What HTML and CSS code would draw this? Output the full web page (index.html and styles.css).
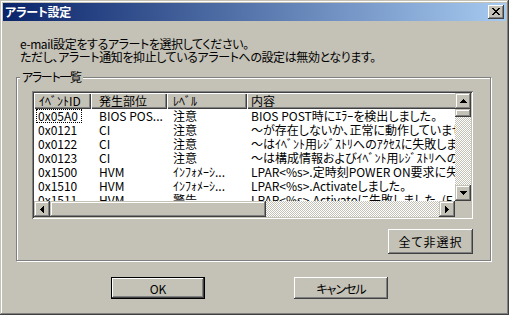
FILE: index.html
```html
<!DOCTYPE html>
<html>
<head>
    <title>アラート設定</title>
    <meta charset="UTF-8">
    <link rel="stylesheet" href="styles.css">
</head>
<body>
    <div class="window">
        <!-- Title bar -->
        <div class="titlebar">
            <span class="title">アラート設定</span>
            <button class="close-btn" title="閉じる">
                <svg width="8" height="7" viewBox="0 0 8 7"><path d="M0 0h2v1h1v1h2V1h1V0h2v1H7v1H6v1H5v1h1v1h1v1h1v1H6V6H5V5H3v1H2v1H0V6h1V5h1V4h1V3H2V2H1V1H0z"/></svg>
            </button>
        </div>

        <div class="dialog-body">
            <!-- Message -->
            <p class="message">e-mail設定をするアラートを選択してください。<br>ただし、アラート通知を抑止しているアラートへの設定は無効となります。</p>

            <!-- Alert list group -->
            <fieldset class="group">
                <legend>アラート一覧</legend>
                <div class="listview">
                    <div class="lv-view">
                        <table>
                            <colgroup>
                                <col class="col-id"/>
                                <col class="col-part"/>
                                <col class="col-level"/>
                                <col class="col-text"/>
                            </colgroup>
                            <thead>
                                <tr>
                                    <th class="c-id">ｲﾍﾞﾝﾄID</th>
                                    <th class="c-part">発生部位</th>
                                    <th class="c-level">ﾚﾍﾞﾙ</th>
                                    <th class="c-text">内容</th>
                                </tr>
                            </thead>
                            <tbody>
                                <tr>
                                    <td class="c-id"><span class="focus">0x05A0</span></td>
                                    <td class="c-part">BIOS POS...</td>
                                    <td class="c-level">注意</td>
                                    <td class="c-text">BIOS POST時にｴﾗｰを検出しました。</td>
                                </tr>
                                <tr>
                                    <td class="c-id"><span>0x0121</span></td>
                                    <td class="c-part">CI</td>
                                    <td class="c-level">注意</td>
                                    <td class="c-text">～が存在しないか、正常に動作していません。</td>
                                </tr>
                                <tr>
                                    <td class="c-id"><span>0x0122</span></td>
                                    <td class="c-part">CI</td>
                                    <td class="c-level">注意</td>
                                    <td class="c-text">～はｲﾍﾞﾝﾄ用ﾚｼﾞｽﾄﾘへのｱｸｾｽに失敗しました。</td>
                                </tr>
                                <tr>
                                    <td class="c-id"><span>0x0123</span></td>
                                    <td class="c-part">CI</td>
                                    <td class="c-level">注意</td>
                                    <td class="c-text">～は構成情報およびｲﾍﾞﾝﾄ用ﾚｼﾞｽﾄﾘへのｱｸｾｽに失敗しました。</td>
                                </tr>
                                <tr>
                                    <td class="c-id"><span>0x1500</span></td>
                                    <td class="c-part">HVM</td>
                                    <td class="c-level">ｲﾝﾌｫﾒｰｼ...</td>
                                    <td class="c-text">LPAR&lt;%s&gt;.定時刻POWER ON要求に失敗しました。</td>
                                </tr>
                                <tr>
                                    <td class="c-id"><span>0x1510</span></td>
                                    <td class="c-part">HVM</td>
                                    <td class="c-level">ｲﾝﾌｫﾒｰｼ...</td>
                                    <td class="c-text">LPAR&lt;%s&gt;.Activateしました。</td>
                                </tr>
                                <tr>
                                    <td class="c-id"><span>0x1511</span></td>
                                    <td class="c-part">HVM</td>
                                    <td class="c-level">警告</td>
                                    <td class="c-text">LPAR&lt;%s&gt;.Activateに失敗しました。(F...</td>
                                </tr>
                            </tbody>
                        </table>
                    </div>

                    <!-- Vertical scrollbar -->
                    <div class="vscroll">
                        <div class="sb-btn"><svg width="7" height="4" viewBox="0 0 7 4"><path d="M3 0h1v1h1v1h1v1h1v1H0V3h1V2h1V1h1z"/></svg></div>
                        <div class="sb-thumb v"></div>
                        <div class="sb-track"></div>
                        <div class="sb-btn"><svg width="7" height="4" viewBox="0 0 7 4"><path d="M0 0h7v1H6v1H5v1H4v1H3V3H2V2H1V1H0z"/></svg></div>
                    </div>

                    <!-- Horizontal scrollbar -->
                    <div class="hscroll">
                        <div class="sb-btn"><svg width="4" height="7" viewBox="0 0 4 7"><path d="M3 0h1v7H3V6H2V5H1V4H0V3h1V2h1V1h1z"/></svg></div>
                        <div class="sb-thumb h"></div>
                        <div class="sb-track"></div>
                        <div class="sb-btn"><svg width="4" height="7" viewBox="0 0 4 7"><path d="M0 0h1v1h1v1h1v1h1v1H3v1H2v1H1v1H0z"/></svg></div>
                    </div>
                    <div class="sb-corner"></div>
                </div>

                <div class="group-actions">
                    <button class="btn btn-wide">全て非選択</button>
                </div>
            </fieldset>

            <!-- Dialog buttons -->
            <div class="dialog-buttons">
                <button class="btn btn-default">OK</button>
                <button class="btn btn-cancel">キャンセル</button>
            </div>
        </div>
    </div>
</body>
</html>
```

FILE: styles.css
```css
/* --- Classic dialog window --- */
body {
    margin: 0;
    padding: 0;
    font-family: "Noto Sans CJK JP", "Liberation Sans", sans-serif;
    font-size: 12px;
    font-feature-settings: "palt";
    color: #000;
}
.window {
    width: 509px;
    height: 315px;
    box-sizing: border-box;
    padding: 3px;
    background-color: #c4c1b6;
    box-shadow: inset -1px -1px #404040, inset 1px 1px #c4c1b6,
                inset -2px -2px #808080, inset 2px 2px #fff;
    display: flex;
    flex-direction: column;
}

/* --- Title bar --- */
.titlebar {
    height: 18px;
    flex-shrink: 0;
    display: flex;
    align-items: center;
    background: linear-gradient(to right, #0a246a, #a6caf0);
}
.title {
    padding-left: 2px;
    color: #fff;
    font-weight: 700;
    line-height: 18px;
    letter-spacing: -0.3px;
}
.close-btn {
    margin-left: auto;
    margin-right: 2px;
    width: 16px;
    height: 14px;
    padding: 0;
    border: none;
    background-color: #c4c1b6;
    box-shadow: inset -1px -1px #404040, inset 1px 1px #fff, inset -2px -2px #808080;
    display: flex;
    align-items: center;
    justify-content: center;
}
.close-btn svg { margin: 0 1px 1px 0; }

/* --- Body --- */
.dialog-body {
    flex-grow: 1;
    display: flex;
    flex-direction: column;
}
.message {
    margin: 16px 0 0 17px;
    line-height: 13px;
    letter-spacing: -0.4px;
}

/* --- Group box --- */
.group {
    margin: 7px 0 0 13px;
    padding: 0;
    width: 475px;
    height: 191px;
    box-sizing: border-box;
    min-width: 0;
    border: 1px solid #808080;
    box-shadow: inset 1px 1px #fff, 1px 1px #fff;
}
.group legend {
    margin-left: 3px;
    padding: 0 2px;
    line-height: 14px;
    letter-spacing: -1.3px;
    background-color: #c4c1b6;
}

/* --- List view --- */
.listview {
    margin: 7px 0 0 15px;
    width: 441px;
    height: 128px;
    box-sizing: border-box;
    padding: 2px;
    background-color: #fff;
    box-shadow: inset 1px 1px #808080, inset -1px -1px #fff,
                inset 2px 2px #404040, inset -2px -2px #c4c1b6;
    display: grid;
    grid-template-columns: 1fr 16px;
    grid-template-rows: 1fr 16px;
}
.lv-view {
    overflow: hidden;
    background-color: #fff;
}
table {
    width: 560px;
    border-collapse: collapse;
    table-layout: fixed;
}
.col-id { width: 57px; }
.col-part { width: 76px; }
.col-level { width: 80px; }
.col-text { width: 347px; }
th, td {
    padding: 0 0 0 6px;
    text-align: left;
    white-space: nowrap;
    overflow: hidden;
}
th {
    height: 16px;
    line-height: 16px;
    font-weight: 400;
    background-color: #c4c1b6;
    box-shadow: inset 1px 1px #fff, inset -1px -1px #404040, inset -2px -2px #808080;
}
td {
    height: 14px;
    line-height: 14px;
}
th.c-id { padding-left: 5px; }
td.c-id { padding-left: 2px; }
.c-part { padding-left: 8px; }
.c-text { padding-left: 4px; }
td.c-id span {
    padding: 0 1px;
    border: 1px solid transparent;
    display: inline-block;
    line-height: 12px;
}
td.c-id span.focus {
    border: 1px dotted #000;
    padding-right: 3px;
}

/* --- Scrollbars --- */
.vscroll {
    display: flex;
    flex-direction: column;
}
.hscroll {
    display: flex;
}
.sb-btn {
    width: 16px;
    height: 16px;
    flex-shrink: 0;
    background-color: #c4c1b6;
    box-shadow: inset -1px -1px #404040, inset 1px 1px #c4c1b6,
                inset -2px -2px #808080, inset 2px 2px #fff;
    display: flex;
    align-items: center;
    justify-content: center;
}
.sb-thumb {
    flex-shrink: 0;
    background-color: #c4c1b6;
    box-shadow: inset -1px -1px #404040, inset 1px 1px #c4c1b6,
                inset -2px -2px #808080, inset 2px 2px #fff;
}
.sb-thumb.v { height: 8px; }
.sb-thumb.h { width: 216px; }
.sb-track {
    flex-grow: 1;
    background-color: #fff;
    background-image: repeating-conic-gradient(#c4c1b6 0 25%, #fff 0 50%);
    background-size: 2px 2px;
}
.sb-corner { background-color: #c4c1b6; }

/* --- Buttons --- */
.btn {
    padding: 0;
    border: none;
    font: inherit;
    color: #000;
    background-color: #c4c1b6;
    box-shadow: inset -1px -1px #404040, inset 1px 1px #fff, inset -2px -2px #808080;
}
.group-actions {
    margin: 10px 0 0 15px;
    width: 441px;
    display: flex;
    justify-content: flex-end;
}
.btn-wide {
    width: 85px;
    height: 25px;
    letter-spacing: 1px;
}
.dialog-buttons {
    margin-top: 16px;
    padding-left: 108px;
    display: flex;
    gap: 89px;
}
.dialog-buttons .btn {
    width: 94px;
    height: 22px;
}
.btn-cancel { letter-spacing: -1px; }
.btn-default {
    outline: 1px solid #000;
    outline-offset: -1px;
    box-shadow: inset -2px -2px #404040, inset 2px 2px #fff, inset -3px -3px #808080;
}
```
